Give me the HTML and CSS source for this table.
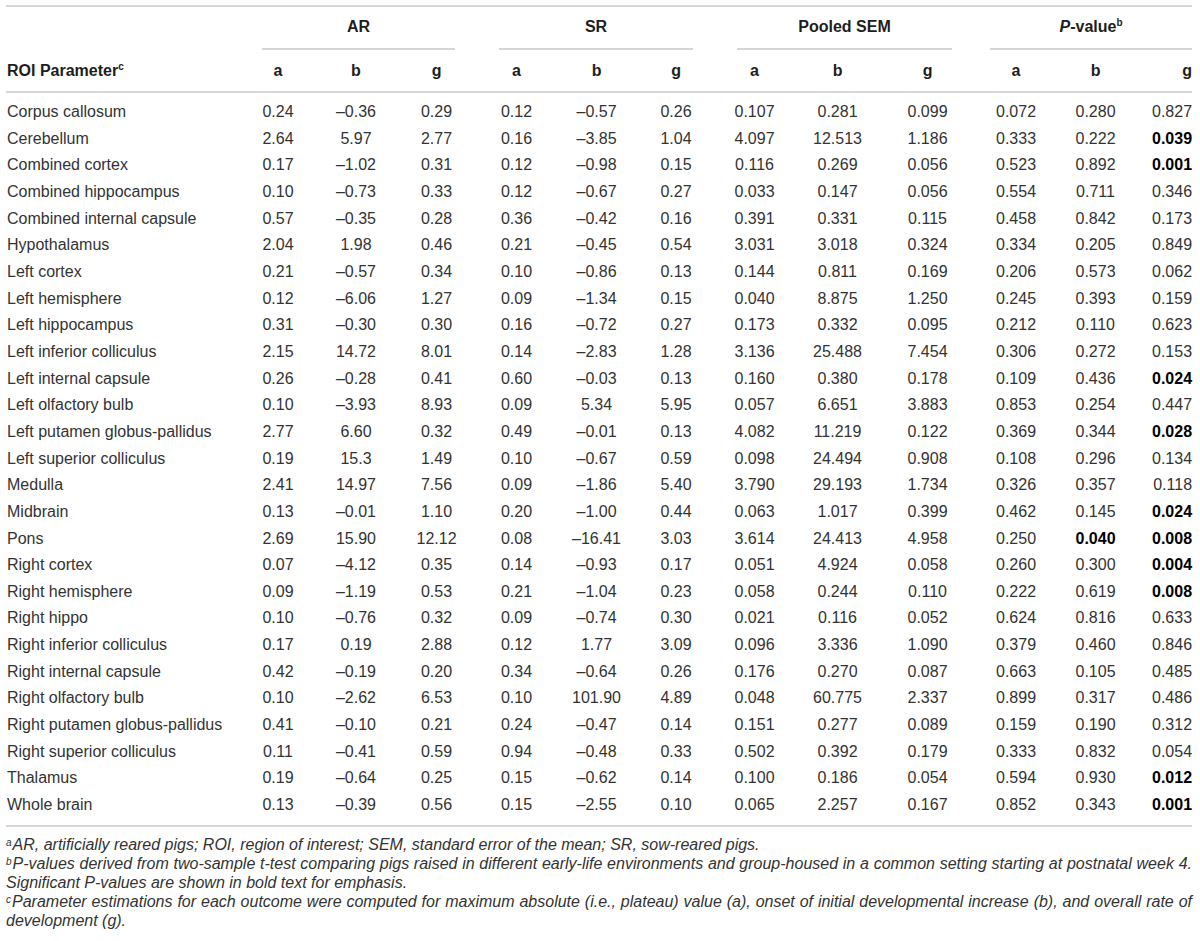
FILE: index.html
```html
<!DOCTYPE html>
<html lang="en">
  <head>
    <meta charset="UTF-8" />
    <meta name="viewport" content="width=device-width, initial-scale=1.0" />
    <title>Growth parameters by region of interest</title>
    <link rel="stylesheet" href="styles.css">
  </head>
  <body>
    <div class="table-wrap">
      <table class="data-table">
        <colgroup>
          <col class="col-label" />
          <col class="c1" /><col class="c2" /><col class="c3" />
          <col class="c4" /><col class="c5" /><col class="c6" />
          <col class="c7" /><col class="c8" /><col class="c9" />
          <col class="c10" /><col class="c11" /><col class="c12" />
        </colgroup>
        <thead>
          <tr class="group-row">
            <th></th>
            <th colspan="3" class="group"><div class="group-title">AR</div></th>
            <th colspan="3" class="group"><div class="group-title">SR</div></th>
            <th colspan="3" class="group"><div class="group-title">Pooled SEM</div></th>
            <th colspan="3" class="group group-last"><div class="group-title"><i>P</i>-value<sup>b</sup></div></th>
          </tr>
          <tr class="param-row">
            <th class="label">ROI Parameter<sup>c</sup></th>
            <th>a</th><th>b</th><th>g</th>
            <th>a</th><th>b</th><th>g</th>
            <th>a</th><th>b</th><th>g</th>
            <th>a</th><th>b</th><th class="last">g</th>
          </tr>
        </thead>
        <tbody id="rows"></tbody>
      </table>

      <div class="notes">
        <p><sup>a</sup>AR, artificially reared pigs; ROI, region of interest; SEM, standard error of the mean; SR, sow-reared pigs.</p>
        <p><sup>b</sup>P-values derived from two-sample t-test comparing pigs raised in different early-life environments and group-housed in a common setting starting at postnatal week 4. Significant P-values are shown in bold text for emphasis.</p>
        <p><sup>c</sup>Parameter estimations for each outcome were computed for maximum absolute (i.e., plateau) value (a), onset of initial developmental increase (b), and overall rate of development (g).</p>
      </div>
    </div>

    <script>
      // "*" marks a significant p-value (shown bold)
      const data = [
        ["Corpus callosum", "0.24 –0.36 0.29 0.12 –0.57 0.26 0.107 0.281 0.099 0.072 0.280 0.827"],
        ["Cerebellum", "2.64 5.97 2.77 0.16 –3.85 1.04 4.097 12.513 1.186 0.333 0.222 *0.039"],
        ["Combined cortex", "0.17 –1.02 0.31 0.12 –0.98 0.15 0.116 0.269 0.056 0.523 0.892 *0.001"],
        ["Combined hippocampus", "0.10 –0.73 0.33 0.12 –0.67 0.27 0.033 0.147 0.056 0.554 0.711 0.346"],
        ["Combined internal capsule", "0.57 –0.35 0.28 0.36 –0.42 0.16 0.391 0.331 0.115 0.458 0.842 0.173"],
        ["Hypothalamus", "2.04 1.98 0.46 0.21 –0.45 0.54 3.031 3.018 0.324 0.334 0.205 0.849"],
        ["Left cortex", "0.21 –0.57 0.34 0.10 –0.86 0.13 0.144 0.811 0.169 0.206 0.573 0.062"],
        ["Left hemisphere", "0.12 –6.06 1.27 0.09 –1.34 0.15 0.040 8.875 1.250 0.245 0.393 0.159"],
        ["Left hippocampus", "0.31 –0.30 0.30 0.16 –0.72 0.27 0.173 0.332 0.095 0.212 0.110 0.623"],
        ["Left inferior colliculus", "2.15 14.72 8.01 0.14 –2.83 1.28 3.136 25.488 7.454 0.306 0.272 0.153"],
        ["Left internal capsule", "0.26 –0.28 0.41 0.60 –0.03 0.13 0.160 0.380 0.178 0.109 0.436 *0.024"],
        ["Left olfactory bulb", "0.10 –3.93 8.93 0.09 5.34 5.95 0.057 6.651 3.883 0.853 0.254 0.447"],
        ["Left putamen globus-pallidus", "2.77 6.60 0.32 0.49 –0.01 0.13 4.082 11.219 0.122 0.369 0.344 *0.028"],
        ["Left superior colliculus", "0.19 15.3 1.49 0.10 –0.67 0.59 0.098 24.494 0.908 0.108 0.296 0.134"],
        ["Medulla", "2.41 14.97 7.56 0.09 –1.86 5.40 3.790 29.193 1.734 0.326 0.357 0.118"],
        ["Midbrain", "0.13 –0.01 1.10 0.20 –1.00 0.44 0.063 1.017 0.399 0.462 0.145 *0.024"],
        ["Pons", "2.69 15.90 12.12 0.08 –16.41 3.03 3.614 24.413 4.958 0.250 *0.040 *0.008"],
        ["Right cortex", "0.07 –4.12 0.35 0.14 –0.93 0.17 0.051 4.924 0.058 0.260 0.300 *0.004"],
        ["Right hemisphere", "0.09 –1.19 0.53 0.21 –1.04 0.23 0.058 0.244 0.110 0.222 0.619 *0.008"],
        ["Right hippo", "0.10 –0.76 0.32 0.09 –0.74 0.30 0.021 0.116 0.052 0.624 0.816 0.633"],
        ["Right inferior colliculus", "0.17 0.19 2.88 0.12 1.77 3.09 0.096 3.336 1.090 0.379 0.460 0.846"],
        ["Right internal capsule", "0.42 –0.19 0.20 0.34 –0.64 0.26 0.176 0.270 0.087 0.663 0.105 0.485"],
        ["Right olfactory bulb", "0.10 –2.62 6.53 0.10 101.90 4.89 0.048 60.775 2.337 0.899 0.317 0.486"],
        ["Right putamen globus-pallidus", "0.41 –0.10 0.21 0.24 –0.47 0.14 0.151 0.277 0.089 0.159 0.190 0.312"],
        ["Right superior colliculus", "0.11 –0.41 0.59 0.94 –0.48 0.33 0.502 0.392 0.179 0.333 0.832 0.054"],
        ["Thalamus", "0.19 –0.64 0.25 0.15 –0.62 0.14 0.100 0.186 0.054 0.594 0.930 *0.012"],
        ["Whole brain", "0.13 –0.39 0.56 0.15 –2.55 0.10 0.065 2.257 0.167 0.852 0.343 *0.001"],
      ];

      const tbody = document.getElementById("rows");
      tbody.innerHTML = data
        .map(([name, values]) => {
          const cells = values
            .split(" ")
            .map((v, i) => {
              const classes = [];
              if (v.startsWith("*")) classes.push("sig");
              if (i === 11) classes.push("last");
              return `<td class="${classes.join(" ")}">${v.replace("*", "")}</td>`;
            })
            .join("");
          return `<tr><td class="label">${name}</td>${cells}</tr>`;
        })
        .join("");
    </script>
  </body>
</html>
```

FILE: styles.css
```css
* {
  margin: 0;
  padding: 0;
  box-sizing: border-box;
}
body {
  background: #fff;
  color: #333;
  font-family: "Liberation Sans", Arial, sans-serif;
  font-size: 16px;
}
.table-wrap {
  width: 1186px;
  margin: 5px 0 0 6px;
}
.data-table {
  width: 100%;
  table-layout: fixed;
  border-collapse: collapse;
  border-top: 2px solid #d6d6d6;
}
.col-label { width: 234px; }
.c1 { width: 76px; }
.c2 { width: 80px; }
.c3 { width: 81px; }
.c4 { width: 79px; }
.c5 { width: 81px; }
.c6 { width: 78px; }
.c7 { width: 79px; }
.c8 { width: 87px; }
.c9 { width: 93px; }
.c10 { width: 84px; }
.c11 { width: 75px; }
.c12 { width: 59px; }

th {
  font-weight: bold;
  color: #1e1e1e;
  text-align: center;
  line-height: 18px;
}
th sup {
  font-size: 10px;
  line-height: 0;
  vertical-align: 6px;
}
.group {
  padding: 11px 22px 0 22px;
}
.group-last {
  padding: 11px 0 0 16px;
}
.group-title {
  padding-bottom: 12px;
  border-bottom: 2px solid #d6d6d6;
}
.param-row th {
  padding: 12px 0 11px;
  border-bottom: 2px solid #d6d6d6;
}
th.label,
td.label {
  text-align: left;
  padding-left: 1px;
}
td {
  text-align: center;
  line-height: 26.65px;
  white-space: nowrap;
}
td.last,
th.last {
  text-align: right;
}
td.sig {
  font-weight: bold;
  color: #000;
}
tbody tr:first-child td {
  padding-top: 6px;
}
tbody tr:last-child td {
  padding-bottom: 6px;
  border-bottom: 2px solid #d6d6d6;
}
.notes {
  margin-top: 8px;
  font-size: 16px;
  font-style: italic;
  line-height: 19px;
  text-align: justify;
  color: #333;
}
.notes sup {
  font-size: 10px;
  line-height: 0;
  vertical-align: 4px;
  margin-right: 1px;
}
```
